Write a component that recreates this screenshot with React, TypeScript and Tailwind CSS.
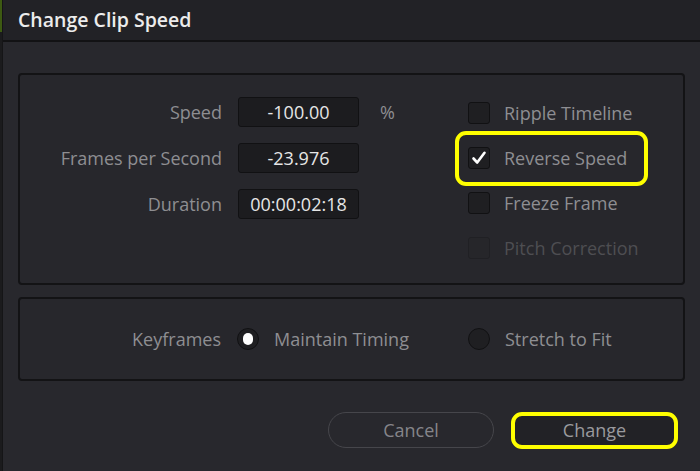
import React from "react";

const font = { fontFamily: '"Open Sans", "Noto Sans", sans-serif' };

function Checkbox({ checked, disabled }: { checked?: boolean; disabled?: boolean }) {
  return (
    <div
      className={`w-[22px] h-[22px] rounded-[3px] border flex items-center justify-center ${
        disabled ? "bg-[#26262a] border-[#202024]" : "bg-[#1f1f22] border-[#111113]"
      }`}
    >
      {checked && (
        <svg width="16" height="16" viewBox="0 0 16 16">
          <path d="M2.5 8.5 L6.2 12.5 L13.5 2.8" fill="none" stroke="#ffffff" strokeWidth="2.6" strokeLinecap="round" strokeLinejoin="round" />
        </svg>
      )}
    </div>
  );
}

function Radio({ selected }: { selected?: boolean }) {
  return (
    <div className="w-[22px] h-[22px] rounded-full bg-[#1f1f22] border border-[#111113] flex items-center justify-center">
      {selected && <div className="w-[10px] h-[12px] rounded-full bg-white" />}
    </div>
  );
}

function Field({ label, value, unit }: { label: string; value: string; unit?: string }) {
  return (
    <div className="flex items-center h-[30px]">
      <div className="w-[202px] text-right text-[#8e8e92]">{label}</div>
      <div className="ml-[16px] w-[121px] h-[30px] bg-[#1c1c1f] border border-[#111113] rounded-[3px] flex items-center justify-center text-[#e6e6e6]">
        {value}
      </div>
      {unit && <div className="ml-[21px] text-[#8e8e92]">{unit}</div>}
    </div>
  );
}

function CheckRow({ label, checked, disabled }: { label: string; checked?: boolean; disabled?: boolean }) {
  return (
    <div className="flex items-center h-[22px]">
      <Checkbox checked={checked} disabled={disabled} />
      <span className={`ml-[14px] ${disabled ? "text-[#4e4e52]" : "text-[#8e8e92]"}`}>{label}</span>
    </div>
  );
}

export default function App() {
  return (
    <div className="w-[700px] h-[471px] flex bg-[#28282d] overflow-hidden text-[18px]" style={font}>
      <div className="w-[2px] flex flex-col bg-[#1b1b1d]">
        <div className="h-[32px] bg-[#3d5a12]" />
      </div>
      <div className="flex-1 flex flex-col border-l border-[#151517]">
        <div className="h-[42px] bg-[#222226] border-b-2 border-[#121214] flex items-center pl-[15px]">
          <span className="text-[19.5px] font-semibold text-[#ececec]">Change Clip Speed</span>
        </div>

        <div className="px-[15px] pt-[31px]">
          <div className="relative h-[212px] rounded-[4px] border-2 border-[#131315] bg-[#27272c] flex pt-[22px]">
            <div className="flex flex-col gap-[16px]">
              <Field label="Speed" value="-100.00" unit="%" />
              <Field label="Frames per Second" value="-23.976" />
              <Field label="Duration" value="00:00:02:18" />
            </div>
            <div className="absolute left-[448px] top-[27px] flex flex-col gap-[23px]">
              <CheckRow label="Ripple Timeline" />
              <CheckRow label="Reverse Speed" checked />
              <CheckRow label="Freeze Frame" />
              <CheckRow label="Pitch Correction" disabled />
            </div>
            <div className="absolute left-[435px] top-[56px] w-[193px] h-[55px] rounded-[11px] border-[4px] border-[#ffff00] pointer-events-none" />
          </div>

          <div className="mt-[12px] h-[84px] rounded-[4px] border-2 border-[#131315] bg-[#27272c] flex items-center">
            <div className="w-[201px] text-right text-[#8e8e92]">Keyframes</div>
            <div className="ml-[16px] w-[231px] flex items-center">
              <Radio selected />
              <span className="ml-[15px] text-[#8e8e92]">Maintain Timing</span>
            </div>
            <div className="flex items-center">
              <Radio />
              <span className="ml-[15px] text-[#8e8e92]">Stretch to Fit</span>
            </div>
          </div>

          <div className="mt-[31px] flex justify-end gap-[17px] pr-[7px]">
            <button className="w-[166px] h-[36px] rounded-full border border-[#46464b] text-[#85858a] text-[18px]">
              Cancel
            </button>
            <button className="w-[167px] h-[37px] rounded-[11px] border-[4px] border-[#ffff00] bg-[#222226] text-[#9a9a9e] text-[18px]">
              Change
            </button>
          </div>
        </div>
      </div>
    </div>
  );
}
